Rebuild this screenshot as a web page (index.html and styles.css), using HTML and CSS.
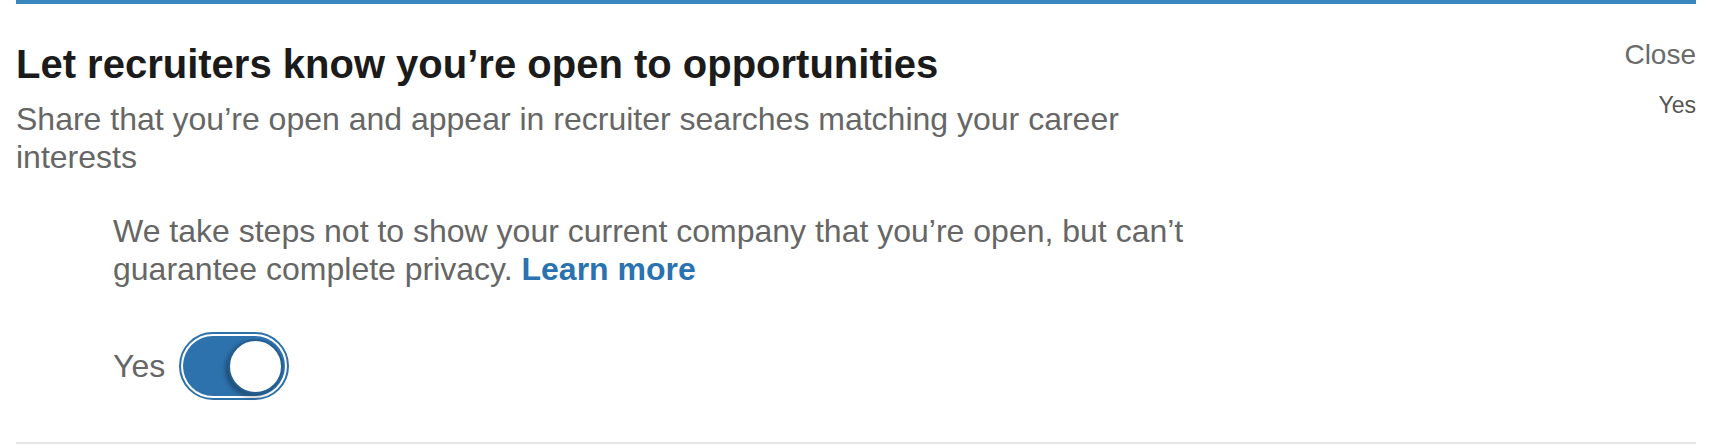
FILE: index.html
```html
<!DOCTYPE html>
<html lang="en">
<head>
    <meta charset="UTF-8">
    <meta name="viewport" content="width=device-width, initial-scale=1.0">
    <title>Career interests</title>
    <link rel="stylesheet" href="styles.css">
</head>
<body>
    <section class="panel">
        <div class="panel-header">
            <div class="intro">
                <h1 class="title">Let recruiters know you’re open to opportunities</h1>
                <p class="subtitle">Share that you’re open and appear in recruiter searches matching your career interests</p>
            </div>
            <div class="actions">
                <button class="close-btn">Close</button>
                <span class="status">Yes</span>
            </div>
        </div>

        <div class="body">
            <p class="note">We take steps not to show your current company that you’re open, but can’t guarantee complete privacy. <a href="#" class="link">Learn more</a></p>

            <label class="switch-row">
                <span class="switch-label">Yes</span>
                <span class="switch">
                    <span class="switch-track">
                        <span class="switch-knob"></span>
                    </span>
                </span>
            </label>
        </div>
    </section>
</body>
</html>
```

FILE: styles.css
```css
body {
    margin: 0;
    background: #fff;
    font-family: "Liberation Sans", Arial, Helvetica, sans-serif;
    color: #666;
}
.panel {
    margin: 0 20px 0 16px;
    border-top: 4px solid #3a87c0;
    border-bottom: 2px solid #e6e6e6;
    padding-bottom: 42px;
}
.panel-header {
    display: flex;
    justify-content: space-between;
    align-items: flex-start;
    padding-top: 30px;
}
.intro {
    padding-top: 6px;
}
.title {
    margin: 0;
    font-size: 40px;
    line-height: 48px;
    font-weight: bold;
    color: #1b1b1b;
}
.subtitle {
    margin: 12px 0 0;
    max-width: 1150px;
    font-size: 32px;
    line-height: 38px;
}
.actions {
    display: flex;
    flex-direction: column;
    align-items: flex-end;
}
.close-btn {
    margin-top: 2px;
    border: none;
    background: none;
    padding: 0;
    font-family: inherit;
    font-size: 28px;
    line-height: 38px;
    color: #6b6b6b;
    cursor: pointer;
}
.status {
    margin-top: 16px;
    font-size: 23px;
    line-height: 30px;
    color: #555;
}
.body {
    padding-left: 97px;
}
.note {
    margin: 36px 0 0;
    max-width: 1140px;
    font-size: 32px;
    line-height: 38px;
}
.link {
    color: #2a72b0;
    font-weight: bold;
    text-decoration: none;
}
.switch-row {
    display: flex;
    align-items: center;
    gap: 14px;
    margin-top: 44px;
}
.switch-label {
    font-size: 32px;
    line-height: 38px;
}
.switch {
    width: 110px;
    height: 68px;
    box-sizing: border-box;
    border: 2px solid #2d71ab;
    border-radius: 34px;
    padding: 2px;
    background: #fff;
}
.switch-track {
    display: flex;
    justify-content: flex-end;
    align-items: center;
    height: 100%;
    padding-right: 2px;
    border-radius: 30px;
    background: #2e72ad;
}
.switch-knob {
    width: 55px;
    height: 55px;
    box-sizing: border-box;
    border-radius: 50%;
    border: 2px solid #235e92;
    background: #fff;
    box-shadow: -3px 3px 4px rgba(0, 0, 0, 0.3);
}
```
